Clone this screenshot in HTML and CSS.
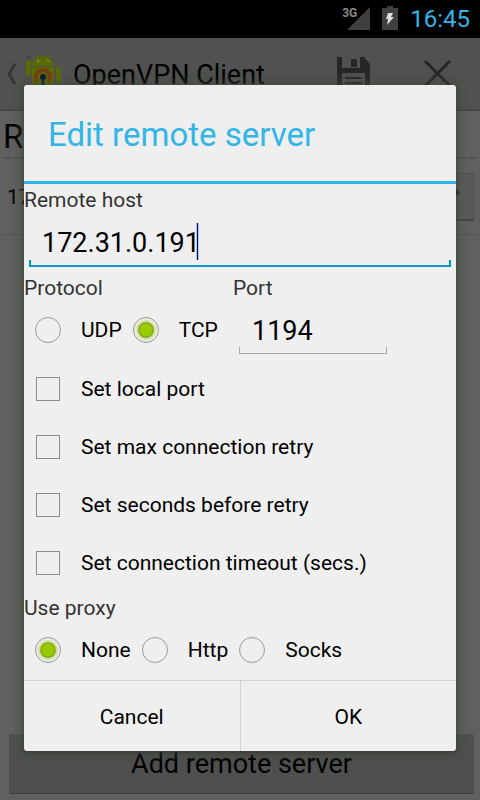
FILE: index.html
```html
<!DOCTYPE html>
<html lang="en">
<head>
<meta charset="utf-8">
<meta name="viewport" content="width=device-width, initial-scale=1">
<title>OpenVPN Client</title>
<link rel="stylesheet" href="styles.css">
</head>
<body>
<header class="status">
  <span class="network">3G</span>
  <svg class="signal" width="24" height="24" viewBox="0 0 24 24" aria-hidden="true"><path d="M23 0v23H0z" fill="#404040"/></svg>
  <svg class="battery" width="16" height="24" viewBox="0 0 16 24" aria-hidden="true"><path d="M5 0h6v2h5v22H0V2h5z" fill="#404040"/><path d="M6 7h5l-2 4h3l-7 8 1-6H4z" fill="#ddd"/></svg>
  <time class="clock">16:45</time>
</header>
<div class="screen">
  <div class="app">
    <div class="bar">
      <svg class="back" width="12" height="22" viewBox="0 0 12 22" aria-hidden="true"><path d="M10 1L4 11l6 10" fill="none" stroke="#353535" stroke-width="3"/></svg>
      <svg class="logo" width="38" height="44" viewBox="0 0 38 44" aria-hidden="true">
        <path d="M11 1l3 5M26 1l-3 5" stroke="#5a6b00" stroke-width="1"/>
        <path d="M7 14a11 10 0 0 1 22 0z" fill="#5a6b00"/>
        <path d="M7 15h22v24H7z" fill="#5a6b00"/>
        <rect x="1" y="8" width="5" height="16" rx="2" fill="#5a6b00"/>
        <rect x="31" y="15" width="5" height="16" rx="2" fill="#5a6b00"/>
        <path d="M1 4h5v3H1zM2 2h1v2H2zM4 2h1v2H4z" fill="#4c4444"/>
        <circle cx="13" cy="9" r="1" fill="#888"/><circle cx="23" cy="9" r="1" fill="#888"/>
        <path d="M13 30a7 7 0 1 1 10 0" fill="none" stroke="#7d3c10" stroke-width="4"/>
        <circle cx="18" cy="25" r="3" fill="#081b3c"/><path d="M17 26h2l1 10h-4z" fill="#081b3c"/>
      </svg>
      <h1 class="app-name">OpenVPN Client</h1>
      <svg class="save" width="34" height="34" viewBox="0 0 34 34" aria-hidden="true"><path d="M0 0h5v11h18V0h4l6 7v27H0z" fill="#262626"/><path d="M5 16h23v18H5z" fill="#515151"/><path d="M14 2h6v8h-6zM8 20h17v2H8zM8 25h17v2H8z" fill="#262626"/></svg>
      <svg class="close" width="28" height="28" viewBox="0 0 28 28" aria-hidden="true"><path d="M1 1l25 25M26 1L1 26" stroke="#262626" stroke-width="3"/></svg>
    </div>
    <h2 class="section">R</h2>
    <div class="server"><span>17</span><span class="more"></span></div>
    <button class="add" type="button">Add remote server</button>
  </div>
  <div class="scrim">
    <form class="dialog" role="dialog" aria-labelledby="title">
      <h2 class="title" id="title">Edit remote server</h2>
      <label class="caption" for="host">Remote host</label>
      <div class="field">
        <input class="entry entry-active" id="host" type="text" value="172.31.0.191">
        <span class="caret"></span>
      </div>
      <div class="columns">
        <div>
          <div class="caption" id="protocol">Protocol</div>
          <div class="options" role="radiogroup" aria-labelledby="protocol">
            <label class="option"><input class="radio" type="radio" name="protocol">UDP</label>
            <label class="option"><input class="radio" type="radio" name="protocol" checked>TCP</label>
          </div>
        </div>
        <div>
          <label class="caption" for="port">Port</label>
          <input class="entry entry-port" id="port" type="text" value="1194">
        </div>
      </div>
      <label class="check"><input class="box" type="checkbox">Set local port</label>
      <label class="check"><input class="box" type="checkbox">Set max connection retry</label>
      <label class="check"><input class="box" type="checkbox">Set seconds before retry</label>
      <label class="check"><input class="box" type="checkbox">Set connection timeout (secs.)</label>
      <div class="caption" id="proxy">Use proxy</div>
      <div class="options" role="radiogroup" aria-labelledby="proxy">
        <label class="option"><input class="radio" type="radio" name="proxy" checked>None</label>
        <label class="option"><input class="radio" type="radio" name="proxy">Http</label>
        <label class="option"><input class="radio" type="radio" name="proxy">Socks</label>
      </div>
      <div class="actions">
        <button class="action" type="button">Cancel</button>
        <button class="action" type="button">OK</button>
      </div>
    </form>
  </div>
</div>
</body>
</html>
```
FILE: styles.css
```css
* { box-sizing: border-box; }
body {
  margin: 0;
  min-height: 100vh;
  display: flex;
  flex-direction: column;
  background: #606060;
  color: #000;
  font-family: Roboto, "Liberation Sans", sans-serif;
  font-size: 21px;
}
h1, h2 { margin: 0; font-weight: 400; }
button, input { font: inherit; color: inherit; margin: 0; }

.status {
  height: 38px;
  padding: 0 10px;
  display: flex;
  align-items: center;
  justify-content: flex-end;
  background: #000;
}
.network {
  margin: 0 -10px 12px 0;
  color: #8a8a8a;
  font-size: 12px;
  font-weight: 700;
}
.battery { margin: 0 12px 2px 11px; }
.clock { color: #33b5e5; font-size: 24px; }

.screen { flex: 1; display: flex; position: relative; }
.app { flex: 1; display: flex; flex-direction: column; }
.bar {
  height: 73px;
  display: flex;
  align-items: center;
  padding: 0 28px 0 5px;
  background: #515151;
  border-bottom: 2px solid #454545;
}
.logo { margin: 0 10px 0 8px; }
.app-name { flex: 1; line-height: 34px; padding-top: 2px; font-size: 27px; }
.save { margin-right: 53px; }
.section {
  margin: 0 3px;
  height: 48px;
  line-height: 52px;
  border-bottom: 2px solid #545454;
  font-size: 33px;
}
.server {
  margin: 0 3px;
  height: 76px;
  display: flex;
  align-items: center;
  justify-content: space-between;
  padding: 0 3px 0 4px;
  border-bottom: 1px solid #545454;
}
.more {
  width: 60px;
  height: 48px;
  background: #5a5a5a;
  border: 1px solid #505050;
  border-bottom: 2px solid #444;
}
.more::before {
  content: "";
  display: block;
  width: 5px;
  height: 5px;
  margin: 16px 0 0 39px;
  background: #2a2a2a;
  transform: rotate(45deg);
}
.add {
  margin: auto 6px 6px 9px;
  height: 60px;
  padding: 0;
  border: 0;
  border-bottom: 1px solid #3c3c3c;
  border-radius: 2px;
  background: #4f4f4f;
  font-size: 27px;
}

.scrim {
  position: absolute;
  inset: 0;
  display: flex;
  align-items: center;
  padding: 0 24px 2px;
}
.dialog {
  flex: 1;
  background: #efefef;
  border-radius: 3px;
  box-shadow: 0 2px 4px rgba(40, 45, 40, .5), 0 0 8px 5px rgba(65, 80, 60, .5);
}
.title {
  height: 99px;
  padding: 0 24px;
  line-height: 100px;
  border-bottom: 3px solid #33b5e5;
  color: #33b5e5;
  font-size: 33px;
}
.caption {
  display: block;
  height: 30px;
  line-height: 33px;
  color: #333;
}
.field { position: relative; height: 58px; padding: 0 5px; }
.entry {
  --line: #aaa;
  --weight: 1px;
  display: block;
  width: 100%;
  height: 53px;
  padding: 5px 13px 0;
  border: 0;
  outline: 0;
  font-size: 27px;
  background:
    linear-gradient(var(--line), var(--line)) left bottom / 100% var(--weight) no-repeat,
    linear-gradient(var(--line), var(--line)) left bottom / var(--weight) 7px no-repeat,
    linear-gradient(var(--line), var(--line)) right bottom / var(--weight) 7px no-repeat;
}
.entry-active { --line: #0099cc; --weight: 2px; }
.entry-port { width: 148px; height: 52px; margin-left: 6px; }
.caret {
  position: absolute;
  left: 172px;
  top: 9px;
  width: 3px;
  height: 37px;
  background: #000a50;
  border: solid #b5c8f5;
  border-width: 0 1px;
}
.columns { display: grid; grid-template-columns: 209px 1fr; }
.options {
  display: flex;
  gap: 11px;
  height: 56px;
  margin-bottom: 2px;
  padding-left: 11px;
}
.option { display: flex; align-items: center; gap: 20px; line-height: 26px; }
.radio, .box { appearance: none; flex: none; }
.radio {
  width: 26px;
  height: 26px;
  border: 1px solid #999;
  border-radius: 50%;
}
.radio:checked {
  background: radial-gradient(circle, #99cc00 6px, #739522 7px, #c0d77c 8px, #e3eac8 10px, #efefef 12px);
}
.check {
  display: flex;
  align-items: center;
  gap: 21px;
  height: 58px;
  padding-left: 12px;
}
.box { width: 24px; height: 24px; border: 1px solid #8c8c8c; }
.actions {
  display: flex;
  height: 71px;
  border-top: 1px solid #d2d2d2;
}
.action {
  flex: 1;
  padding: 2px 0 0;
  border: 0;
  background: none;
}
.action + .action { border-left: 1px solid #d2d2d2; }
```
